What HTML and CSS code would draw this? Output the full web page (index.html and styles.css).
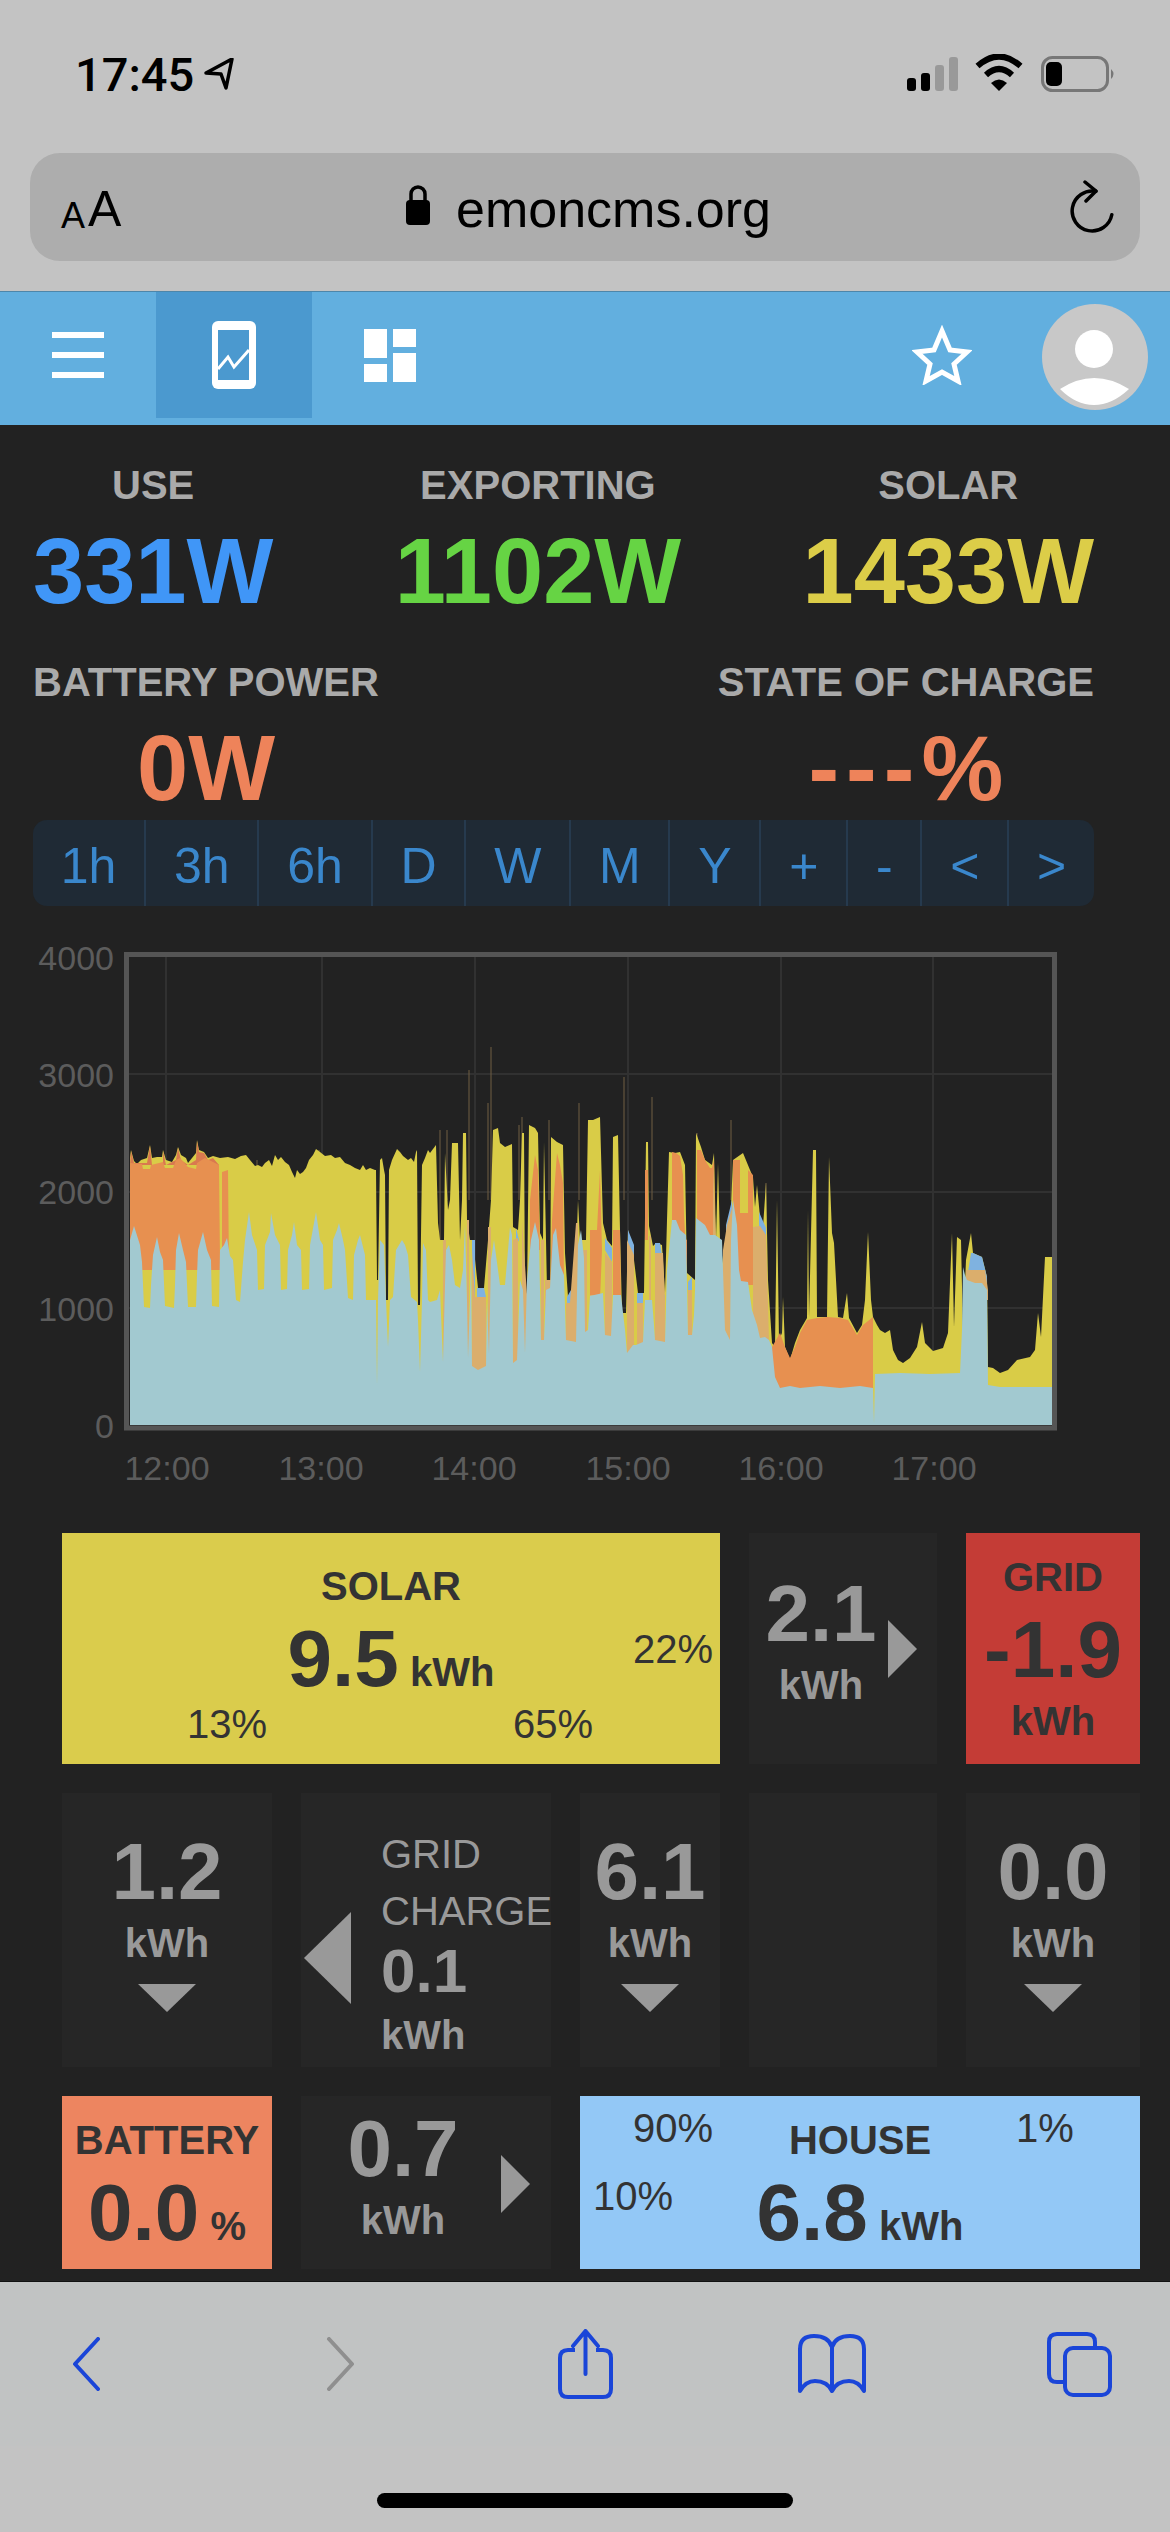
FILE: index.html
```html
<!DOCTYPE HTML>
<html>
<head>
    <title>emoncms</title>
    <meta name="viewport" content="width=1170">
    <link rel="stylesheet" href="styles.css">
</head>
<body>
    <div class="statusbar">
        <span class="time">17:45</span>
        <svg class="location" width="30" height="32" viewBox="0 0 30 32"><path d="M28 1 L22 30 L17 16 L2 15 Z" fill="none" stroke="#000" stroke-width="3.5" stroke-linejoin="round"/></svg>
        <svg class="status-icons" width="215" height="40" viewBox="905 54 215 40">
            <rect x="907" y="78" width="9" height="13" rx="3"/>
            <rect x="921" y="73" width="9" height="18" rx="3"/>
            <rect x="935" y="65" width="9" height="26" rx="3" fill="#999"/>
            <rect x="949" y="57" width="9" height="34" rx="3" fill="#999"/>
            <path d="M977.5 66 Q999 47 1020.5 66 M986 75 Q999 63 1012 75" fill="none" stroke="#000" stroke-width="6"/>
            <path d="M991 83 Q999 76 1007 83 L999 91 Z"/>
            <rect x="1042.5" y="57.5" width="65" height="33" rx="10" fill="none" stroke="#777" stroke-width="3"/>
            <rect x="1046" y="62" width="16" height="24" rx="5"/>
            <path d="M1111 69 Q1116 74 1111 79 Z" fill="#777"/>
        </svg>
    </div>

    <div class="urlbar">
        <div class="aa"><span class="aa-small">A</span><span class="aa-big">A</span></div>
        <div class="url">
            <svg width="26" height="40" viewBox="0 0 26 40"><rect x="1" y="15" width="24" height="25" rx="4"/><path d="M6 17 V9 a7 7 0 0 1 14 0 V17" fill="none" stroke="#000" stroke-width="3.5"/></svg>
            <span>emoncms.org</span>
        </div>
        <svg class="reload" width="46" height="54" viewBox="0 0 46 54"><path d="M24 11 A20 20 0 1 0 43 32" fill="none" stroke="#000" stroke-width="3.5" stroke-linecap="round" transform="rotate(8 23 32)"/><path d="M16 2 L27 11 L17 21" fill="none" stroke="#000" stroke-width="3.5" stroke-linecap="round" stroke-linejoin="round"/></svg>
    </div>

    <div class="nav">
        <div class="nav-item">
            <div class="burger"><i></i><i></i><i></i></div>
        </div>
        <div class="nav-item active">
            <svg width="44" height="68" viewBox="0 0 44 68"><rect width="44" height="68" rx="6" fill="#fff"/><rect x="6" y="9" width="31" height="50" fill="#4b99cf"/><path d="M6 48 L16 36 L22 46 L37 29" fill="none" stroke="#fff" stroke-width="3"/></svg>
        </div>
        <div class="nav-item">
            <svg width="53" height="53" viewBox="0 0 53 53" fill="#fff"><rect width="23" height="29"/><rect y="35" width="23" height="18"/><rect x="29" width="23" height="18"/><rect x="29" y="24" width="23" height="29"/></svg>
        </div>
        <div class="nav-item nav-star">
            <svg width="60" height="60" viewBox="0 0 60 60"><path d="M30 6 L38 25 L55 27 L42 39 L46 56 L30 47 L14 56 L18 39 L5 27 L22 25 Z" fill="none" stroke="#fff" stroke-width="5"/></svg>
        </div>
        <div class="nav-item nav-user">
            <svg width="106" height="106" viewBox="0 0 106 106"><circle cx="53" cy="53" r="53" fill="#c8c8c8"/><circle cx="52" cy="45" r="19" fill="#fff"/><path d="M18 85 Q52 63 87 85 Q70 101 52 101 Q34 101 18 85 Z" fill="#fff"/></svg>
        </div>
    </div>

    <div class="main">
        <div class="summary">
            <div class="stat"><div class="stat-label">USE</div><div class="stat-value blue">331W</div></div>
            <div class="stat"><div class="stat-label">EXPORTING</div><div class="stat-value green">1102W</div></div>
            <div class="stat"><div class="stat-label">SOLAR</div><div class="stat-value yellow">1433W</div></div>
        </div>
        <div class="summary second">
            <div class="stat"><div class="stat-label">BATTERY POWER</div><div class="stat-value orange">0W</div></div>
            <div class="stat"><div class="stat-label">STATE OF CHARGE</div><div class="stat-value orange"><span class="dashes">---</span>%</div></div>
        </div>

        <div class="ranges">
            <a>1h</a><a>3h</a><a>6h</a><a>D</a><a>W</a><a>M</a><a>Y</a><a>+</a><a>-</a><a>&lt;</a><a>&gt;</a>
        </div>

        <svg class="chart" width="1170" height="560" viewBox="0 930 1170 560">
            <g class="grid-lines">
                <path d="M129 1074 H1052 M129 1192 H1052 M129 1308 H1052"/>
                <path d="M166 957 V1425 M322 957 V1425 M475 957 V1425 M628 957 V1425 M781 957 V1425 M933 957 V1425"/>
            </g>
            <g class="spikes">
                <path d="M257 1160 V1260 M319 1150 V1240 M469 1070 V1200 M491 1047 V1200 M488 1103 V1200 M522 1117 V1200 M519 1125 V1200 M549 1120 V1200 M579 1103 V1200 M624 1077 V1200 M652 1097 V1200 M697 1133 V1200 M731 1120 V1200 M766 1183 V1300 M447 1130 V1200 M440 1130 V1240"/>
            </g>
            <g class="layers">
            <path fill="#d9cc47" d="M130 1158 L131 1150 134 1161 137 1164 141 1160 147 1158 150 1145 152 1158 157 1157 162 1157 163 1150 166 1160 172 1162 176 1155 178 1147 181 1155 186 1158 188 1163 192 1158 196 1153 197 1140 199 1150 204 1152 208 1158 213 1156 220 1158 228 1157 235 1159 241 1156 246 1155 250 1160 255 1166 258 1165 262 1167 265 1163 269 1160 272 1166 275 1155 278 1160 281 1157 285 1162 289 1165 292 1172 295 1178 297 1170 300 1174 303 1172 306 1168 309 1160 313 1155 316 1149 320 1152 325 1156 331 1155 335 1158 340 1157 345 1163 350 1165 355 1168 360 1170 363 1165 366 1170 370 1168 375 1170 376 1170 377 1280 378 1280 380 1160 382 1158 384 1170 385 1175 386 1300 388 1300 389 1170 392 1160 397 1149 400 1152 403 1156 408 1160 411 1158 414 1162 416 1152 417 1150 418 1305 420 1305 422 1165 425 1158 428 1150 430 1153 436 1145 438 1223 440 1240 444 1240 445 1153 448 1210 450 1200 452 1143 458 1143 460 1240 462 1200 463 1133 466 1133 467 1220 470 1240 473 1240 478 1288 484 1288 488 1240 491 1200 493 1130 498 1128 500 1143 505 1147 512 1144 513 1227 518 1230 520 1200 522 1133 524 1133 525 1290 527 1295 529 1125 535 1128 538 1133 540 1233 543 1240 544 1142 546 1240 548 1340 550 1340 551 1137 557 1142 563 1145 565 1253 568 1297 575 1290 578 1200 580 1240 586 1240 588 1120 593 1120 600 1117 603 1223 607 1240 612 1246 613 1137 618 1135 620 1230 622 1313 626 1313 628 1230 634 1260 638 1293 644 1293 646 1142 648 1142 649 1226 653 1246 656 1243 662 1245 665 1293 667 1220 669 1152 675 1153 680 1152 685 1165 687 1273 695 1280 696 1133 701 1147 705 1160 712 1165 714 1153 716 1240 718 1163 720 1240 726 1287 730 1230 733 1160 743 1153 750 1170 753 1177 755 1207 757 1185 760 1217 763 1227 766 1183 768 1280 772 1343 775 1347 777 1200 779 1340 782 1333 783 1297 785 1347 790 1360 795 1343 800 1330 807 1318 808 1210 809 1318 813 1150 816 1150 817 1317 827 1317 829 1157 832 1233 834 1243 838 1317 843 1318 847 1293 849 1318 857 1333 862 1325 865 1300 868 1232 871 1300 873 1317 877 1325 880 1330 885 1333 890 1330 893 1350 898 1360 903 1363 910 1358 917 1347 922 1322 925 1343 933 1351 943 1348 948 1333 952 1233 954 1327 957 1237 961 1240 963 1333 966 1260 971 1233 973 1253 982 1257 987 1277 988 1367 993 1368 1000 1373 1008 1370 1017 1360 1030 1357 1035 1350 1038 1313 1041 1337 1045 1257 1052 1257 1052 1425 130 1425 Z"/>
            <path fill="#d9794f" d="M130 1165 L131 1151 134 1163 147 1163 150 1146 152 1165 163 1165 163 1151 166 1165 176 1160 178 1148 181 1160 188 1165 196 1160 197 1141 199 1152 204 1153 208 1160 213 1158 219 1165 Z"/>
            <path fill="#e79050" d="M130 1163 L142 1164 143 1169 150 1169 151 1165 163 1162 165 1168 173 1168 176 1160 180 1158 188 1167 196 1169 197 1163 205 1158 219 1165 220 1260 222 1260 222 1172 228 1170 229 1270 130 1270 Z M530 1200 L535 1155 538 1170 540 1250 530 1250 Z M552 1220 L557 1153 560 1165 563 1183 564 1280 550 1290 Z M590 1230 L597 1230 600 1170 602 1250 600 1300 590 1300 Z M613 1230 L620 1230 621 1300 613 1300 Z M645 1170 L648 1170 648 1240 645 1240 Z M672 1152 L676 1153 680 1156 683 1175 684 1215 687 1273 687 1240 672 1230 Z M697 1150 L701 1150 705 1160 710 1168 712 1168 714 1160 715 1240 697 1230 Z M733 1160 L740 1160 740 1213 748 1213 748 1170 753 1175 753 1285 733 1285 Z M772 1347 L780 1333 785 1347 790 1358 795 1347 800 1333 807 1320 817 1318 827 1317 840 1318 848 1320 857 1335 863 1325 873 1317 873 1390 772 1390 Z"/>
            <path fill="#7fb2e0" d="M472 1240 H475 V1300 H472 Z M477 1288 L484 1288 486 1297 477 1297 Z M516 1228 L519 1240 516 1245 Z M567 1297 L571 1290 571 1310 567 1310 Z M605 1238 L612 1248 612 1262 605 1250 Z M628 1230 L634 1245 634 1260 628 1250 Z M637 1293 H643 V1305 H637 Z M655 1243 H660 L662 1255 655 1255 Z M662 1295 H665 V1305 H662 Z M688 1282 L692 1277 692 1295 688 1295 Z M725 1292 L727 1280 727 1300 725 1300 Z M726 1225 L732 1200 732 1240 726 1240 Z M759 1212 L766 1228 766 1240 759 1240 Z M971 1253 L973 1253 982 1257 987 1277 987 1285 966 1285 Z"/>
            <path fill="#dbae6c" d="M443 1240 H446 V1380 H443 Z M467 1220 H469 V1380 H467 Z M472 1250 L475 1297 484 1297 486 1297 486 1380 472 1380 Z M488 1227 H491 V1380 H488 Z M513 1240 L518 1238 518 1380 513 1380 Z M522 1220 L527 1295 527 1380 522 1380 Z M541 1240 H544 V1380 H541 Z M545 1280 H551 V1380 H545 Z M566 1303 L570 1303 576 1223 578 1223 578 1380 566 1380 Z M583 1250 H587 V1380 H583 Z M590 1295 H597 V1380 H590 Z M605 1253 L612 1262 612 1380 605 1380 Z M627 1240 L634 1255 634 1380 627 1380 Z M637 1303 H643 V1380 H637 Z M649 1236 H651 V1380 H649 Z M655 1253 L663 1253 665 1300 665 1380 655 1380 Z M688 1290 H692 V1380 H688 Z M713 1163 L716 1240 720 1240 722 1280 722 1380 713 1380 Z M723 1250 L727 1225 733 1205 733 1380 723 1380 Z M753 1227 L760 1226 766 1235 769 1340 769 1380 753 1380 Z M966 1270 L985 1270 988 1290 988 1300 966 1300 Z"/>
            <path fill="#a2c9d0" d="M130 1240 L134 1226 140 1245 142 1262 144 1307 150 1308 151 1285 153 1255 157 1237 160 1252 163 1260 165 1306 174 1308 175 1285 176 1250 179 1233 183 1250 186 1262 188 1307 196 1307 197 1275 198 1250 203 1232 207 1250 211 1260 212 1306 219 1307 220 1250 224 1245 227 1238 230 1256 233 1260 236 1300 240 1302 243 1262 245 1240 249 1212 252 1235 257 1250 258 1290 264 1289 265 1245 270 1232 271 1213 275 1235 280 1245 281 1290 287 1289 288 1250 292 1235 294 1222 297 1245 301 1250 302 1290 309 1289 310 1245 316 1212 320 1240 323 1245 324 1290 332 1288 333 1240 337 1230 339 1223 343 1240 345 1250 348 1298 353 1300 354 1255 358 1240 360 1235 365 1255 366 1300 375 1300 376 1300 377 1385 378 1300 380 1240 384 1245 386 1300 388 1347 390 1300 393 1297 396 1250 402 1240 405 1245 408 1255 411 1297 417 1302 418 1320 420 1372 422 1300 423 1243 426 1250 428 1300 430 1302 437 1300 440 1290 443 1362 445 1285 446 1250 449 1245 452 1260 455 1285 460 1288 463 1270 465 1225 467 1300 468 1358 470 1300 471 1250 472 1366 478 1370 486 1366 487 1300 489 1354 491 1260 494 1240 500 1285 505 1285 510 1227 512 1235 513 1363 517 1360 520 1280 523 1290 525 1353 527 1280 531 1240 535 1222 539 1240 541 1340 544 1340 546 1290 550 1288 553 1235 556 1228 560 1265 564 1275 566 1340 576 1342 578 1245 581 1230 584 1258 585 1332 588 1330 590 1296 603 1293 605 1335 611 1336 613 1295 621 1295 625 1330 627 1353 633 1345 636 1345 643 1342 645 1300 652 1300 654 1325 655 1340 665 1342 667 1270 672 1220 676 1220 680 1230 686 1235 688 1335 692 1335 694 1315 695 1290 696 1218 705 1225 710 1235 715 1235 722 1240 725 1330 730 1340 731 1240 733 1200 737 1225 739 1270 741 1281 748 1282 752 1310 757 1325 760 1338 765 1337 769 1340 772 1347 775 1377 780 1388 790 1386 800 1388 820 1386 840 1388 860 1386 873 1388 874 1423 875 1374 900 1373 930 1374 960 1373 962 1330 963 1267 965 1275 967 1280 975 1283 982 1283 987 1290 988 1385 1000 1387 1052 1387 1052 1425 130 1425 Z"/>
            </g>
            <rect class="frame" x="126.5" y="954.5" width="928" height="473.5"/>
            <g class="axis-y">
                <text x="114" y="970">4000</text>
                <text x="114" y="1087">3000</text>
                <text x="114" y="1204">2000</text>
                <text x="114" y="1321">1000</text>
                <text x="114" y="1438">0</text>
            </g>
            <g class="axis-x">
                <text x="167" y="1480">12:00</text>
                <text x="321" y="1480">13:00</text>
                <text x="474" y="1480">14:00</text>
                <text x="628" y="1480">15:00</text>
                <text x="781" y="1480">16:00</text>
                <text x="934" y="1480">17:00</text>
            </g>
        </svg>

        <div class="flows">
            <div class="box box-solar span3">
                <div class="title">SOLAR</div>
                <div class="val">9.5<span class="unit"> kWh</span></div>
                <span class="pct pct-solar-direct">22%</span>
                <span class="pct pct-solar-batt">13%</span>
                <span class="pct pct-solar-house">65%</span>
            </div>
            <div class="box box-dark flow-h flow-export">
                <div class="stack">
                    <div class="val">2.1</div>
                    <div class="kwh">kWh</div>
                </div>
                <div class="arrow-right"></div>
            </div>
            <div class="box box-grid">
                <div class="title">GRID</div>
                <div class="val">-1.9</div>
                <div class="kwh">kWh</div>
            </div>

            <div class="box box-dark flow-v">
                <div class="val">1.2</div>
                <div class="kwh">kWh</div>
                <div class="arrow-down"></div>
            </div>
            <div class="box box-dark flow-charge">
                <div class="arrow-left"></div>
                <div class="charge">
                    <div class="charge-label">GRID<br>CHARGE</div>
                    <div class="val-small">0.1</div>
                    <div class="kwh">kWh</div>
                </div>
            </div>
            <div class="box box-dark flow-v">
                <div class="val">6.1</div>
                <div class="kwh">kWh</div>
                <div class="arrow-down"></div>
            </div>
            <div class="box box-dark"></div>
            <div class="box box-dark flow-v">
                <div class="val">0.0</div>
                <div class="kwh">kWh</div>
                <div class="arrow-down"></div>
            </div>

            <div class="box box-battery">
                <div class="title">BATTERY</div>
                <div class="val">0.0<span class="unit"> %</span></div>
            </div>
            <div class="box box-dark flow-h flow-discharge">
                <div class="stack">
                    <div class="val">0.7</div>
                    <div class="kwh">kWh</div>
                </div>
                <div class="arrow-right"></div>
            </div>
            <div class="box box-house span3">
                <div class="title">HOUSE</div>
                <div class="val">6.8<span class="unit"> kWh</span></div>
                <span class="pct pct-house-solar">90%</span>
                <span class="pct pct-house-batt">1%</span>
                <span class="pct pct-house-grid">10%</span>
            </div>
        </div>
    </div>

    <div class="toolbar">
        <svg class="tool-back" width="28" height="54" viewBox="0 0 28 54"><path d="M26 2 L3 27 L26 52" fill="none" stroke="#1a45d8" stroke-width="4" stroke-linecap="round" stroke-linejoin="round"/></svg>
        <svg class="tool-forward" width="29" height="54" viewBox="0 0 29 54"><path d="M3 2 L26 27 L3 52" fill="none" stroke="#8f8f8f" stroke-width="4" stroke-linecap="round" stroke-linejoin="round"/></svg>
        <svg class="tool-share" width="55" height="70" viewBox="0 0 55 70"><path d="M17 21 H10 Q2 21 2 29 V60 Q2 68 10 68 H45 Q53 68 53 60 V29 Q53 21 45 21 H38" fill="none" stroke="#1a45d8" stroke-width="4"/><path d="M27.5 45 V3 M15 17 L27.5 2 L40 17" fill="none" stroke="#1a45d8" stroke-width="4" stroke-linecap="round" stroke-linejoin="round"/></svg>
        <svg class="tool-book" width="70" height="62" viewBox="0 0 70 62"><path d="M35 14 C32 5 24 3 17 3 C8 3 3 7 3 16 V58 C7 51 12 48 18 48 C26 48 32 52 35 58 C38 52 44 48 52 48 C58 48 63 51 67 58 V16 C67 7 62 3 53 3 C46 3 38 5 35 14 V58" fill="none" stroke="#1a45d8" stroke-width="4" stroke-linejoin="round"/></svg>
        <svg class="tool-tabs" width="65" height="65" viewBox="0 0 65 65"><path d="M16 50 H10 Q2 50 2 42 V10 Q2 2 10 2 H40 Q48 2 48 10 V14" fill="none" stroke="#1a45d8" stroke-width="4"/><rect x="18" y="16" width="45" height="47" rx="8" fill="none" stroke="#1a45d8" stroke-width="4"/></svg>
    </div>
    <div class="home-indicator"></div>
</body>
</html>
```

FILE: styles.css
```css
html, body
{
    margin: 0;
    padding: 0;
}

body
{
    width: 1170px;
    height: 2532px;
    overflow: hidden;
    background: #c3c3c3;
    font-family: "Liberation Sans", Arial, sans-serif;
}

/* phone chrome */

.statusbar
{
    display: flex;
    align-items: flex-start;
    height: 153px;
    padding: 50px 50px 0 75px;
    box-sizing: border-box;
}

.time
{
    font-family: Roboto, sans-serif;
    font-weight: 500;
    font-size: 47px;
    line-height: 50px;
    color: #000;
}

.location
{
    margin: 8px 0 0 10px;
}

.status-icons
{
    margin: 4px 0 0 auto;
}

.urlbar
{
    display: grid;
    grid-template-columns: 1fr auto 1fr;
    align-items: center;
    height: 108px;
    margin: 0 30px 30px;
    padding: 4px 25px 0 31px;
    box-sizing: border-box;
    background: #adadad;
    border-radius: 30px;
}

.aa
{
    display: flex;
    align-items: flex-end;
    gap: 3px;
    color: #000;
    line-height: 1;
}

.aa-small { font-size: 36px; }
.aa-big { font-size: 50px; }

.url
{
    display: flex;
    align-items: center;
    gap: 25px;
    font-size: 52px;
    color: #000;
}

.url svg
{
    margin-top: -8px;
}

.reload
{
    justify-self: end;
    margin-top: -4px;
}

.nav
{
    display: flex;
    height: 134px;
    background: #62afdf;
    border-top: 1px solid #4d86aa;
    box-sizing: border-box;
}

.nav-item
{
    display: flex;
    align-items: center;
    justify-content: center;
    width: 156px;
    height: 126px;
}

.nav-item.active
{
    background: #4b99cf;
}

.nav-star
{
    width: 152px;
    margin: 0 2px 0 auto;
}

.nav-user
{
    width: 150px;
    height: 130px;
}

.burger i
{
    display: block;
    width: 52px;
    height: 6px;
    margin: 14px 0;
    background: #fff;
}

/* power summary */

.main
{
    height: 1857px;
    padding-top: 36px;
    box-sizing: border-box;
    background: #222;
    border-bottom: 1px solid #111;
}

.summary
{
    display: flex;
    justify-content: space-between;
    width: 1061px;
    margin-left: 33px;
}

.summary.second
{
    margin-top: 37px;
}

.stat
{
    text-align: center;
}

.stat-label
{
    font-size: 40px;
    font-weight: bold;
    line-height: 48px;
    color: #aaa;
}

.stat-value
{
    margin-top: 12px;
    font-size: 92px;
    font-weight: bold;
    line-height: 100px;
}

.dashes
{
    letter-spacing: 7px;
}

.blue { color: #4096f7; }
.green { color: #66d444; }
.yellow { color: #dccd48; }
.orange { color: #ee835a; }

.ranges
{
    display: flex;
    width: 1061px;
    height: 86px;
    margin: 2px 0 0 33px;
    background: #1f2a35;
    border-radius: 14px;
    overflow: hidden;
}

.ranges a
{
    flex: 1 1 auto;
    padding: 7px 0 0;
    font-size: 50px;
    line-height: 78px;
    text-align: center;
    color: #3a87cc;
    border-left: 2px solid #263a4e;
}

.ranges a:first-child
{
    border-left: 0;
}

/* chart */

.chart
{
    display: block;
    margin-top: 24px;
}

.grid-lines path
{
    fill: none;
    stroke: #313131;
    stroke-width: 2;
}

.spikes path
{
    fill: none;
    stroke: #6a5a40;
    stroke-width: 2;
    opacity: .55;
}

.layers
{
    filter: blur(.7px);
}

.frame
{
    fill: none;
    stroke: #555;
    stroke-width: 5;
}

.axis-y text, .axis-x text
{
    font-family: "Liberation Sans", Arial, sans-serif;
    font-size: 34px;
    fill: #5c5c5c;
}

.axis-y text { text-anchor: end; }
.axis-x text { text-anchor: middle; }

/* energy flow boxes */

.flows
{
    display: grid;
    grid-template-columns: 210px 250px 140px 188px 174px;
    grid-template-rows: 231px 274px 173px;
    gap: 29px;
    margin: 43px 0 0 62px;
}

.box
{
    position: relative;
    padding-top: 20px;
    box-sizing: border-box;
    text-align: center;
    color: #333;
}

.span3
{
    grid-column: span 3;
}

.box-dark
{
    padding-top: 0;
    background: #262626;
    color: #999;
}

.box-solar
{
    padding-top: 29px;
    background: #dacc4c;
}

.box-grid
{
    background: #c43c36;
}

.box-battery
{
    background: #ed8560;
}

.box-house
{
    background: #93c8f6;
}

.title
{
    font-size: 40px;
    font-weight: bold;
    line-height: 48px;
}

.val
{
    margin-top: 9px;
    font-size: 80px;
    font-weight: bold;
    line-height: 80px;
}

.unit
{
    font-size: 40px;
}

.kwh
{
    margin-top: 7px;
    font-size: 40px;
    font-weight: bold;
    line-height: 48px;
}

.pct
{
    position: absolute;
    font-size: 40px;
    line-height: 48px;
}

.pct-solar-direct { left: 571px; top: 92px; }
.pct-solar-batt { left: 125px; top: 167px; }
.pct-solar-house { left: 451px; top: 167px; }
.pct-house-solar { left: 53px; top: 8px; }
.pct-house-batt { left: 436px; top: 8px; }
.pct-house-grid { left: 13px; top: 76px; }

.flow-h
{
    display: flex;
    align-items: flex-start;
}

.flow-export
{
    padding-top: 32px;
}

.flow-export .stack
{
    width: 144px;
}

.flow-export .arrow-right
{
    margin: 55px 0 0 -5px;
}

.flow-discharge
{
    padding-top: 4px;
}

.flow-discharge .stack
{
    width: 204px;
}

.flow-discharge .arrow-right
{
    margin: 55px 0 0 -4px;
}

.flow-v
{
    padding-top: 30px;
}

.arrow-right
{
    border-left: 29px solid #999;
    border-top: 29px solid transparent;
    border-bottom: 29px solid transparent;
}

.arrow-down
{
    width: 0;
    margin: 17px auto 0;
    border-top: 28px solid #999;
    border-left: 29px solid transparent;
    border-right: 29px solid transparent;
}

.flow-charge
{
    display: flex;
    align-items: flex-start;
    padding: 33px 0 0 3px;
    text-align: left;
}

.arrow-left
{
    margin-top: 86px;
    border-right: 47px solid #999;
    border-top: 46px solid transparent;
    border-bottom: 46px solid transparent;
}

.charge
{
    margin-left: 30px;
}

.charge-label
{
    font-size: 40px;
    line-height: 57px;
}

.val-small
{
    font-size: 62px;
    font-weight: bold;
    line-height: 62px;
}

.charge .kwh
{
    margin-top: 9px;
}

/* safari toolbar */

.toolbar
{
    display: flex;
    align-items: center;
    height: 164px;
    background: #c1c3c3;
}

.tool-back { margin-left: 72px; }
.tool-forward { margin-left: 226px; }
.tool-share { margin-left: 203px; }
.tool-book { margin-left: 184px; }
.tool-tabs { margin-left: 180px; }

.home-indicator
{
    width: 416px;
    height: 15px;
    margin: 47px auto 0;
    background: #000;
    border-radius: 8px;
}
```
